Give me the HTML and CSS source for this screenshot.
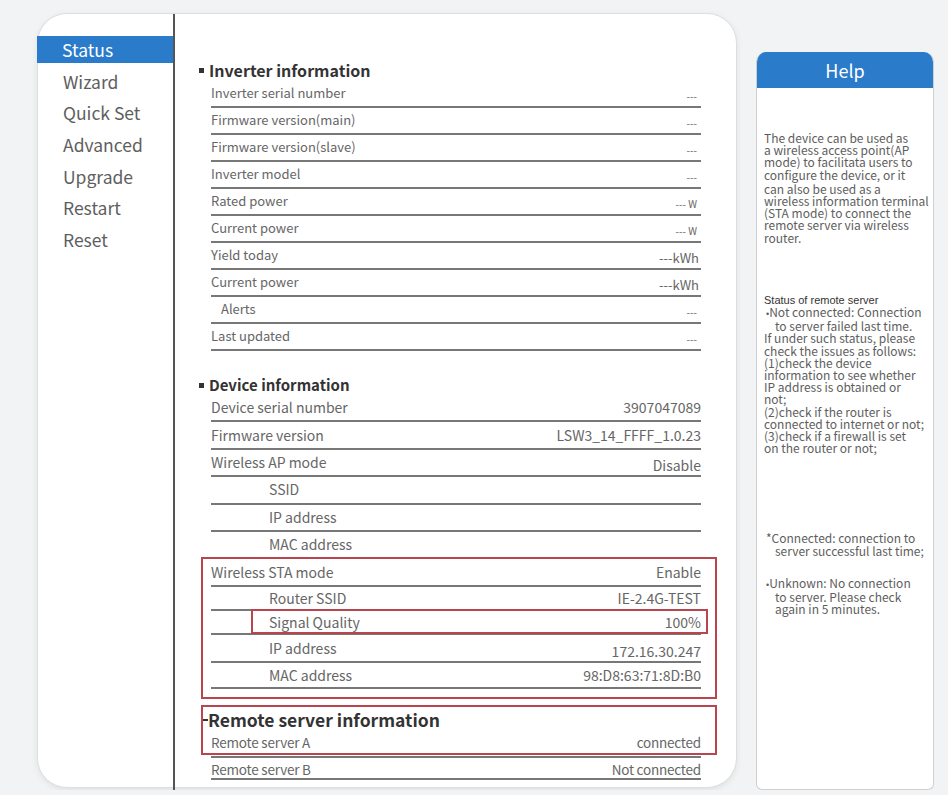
FILE: index.html
```html
<!DOCTYPE html>
<html lang="en">
<head>
    <meta charset="UTF-8">
    <meta name="viewport" content="width=device-width, initial-scale=1.0">
    <title>Status</title>
    <link rel="stylesheet" href="styles.css">
</head>
<body>
    <div class="page">
        <div class="card">
            <nav class="sidebar">
                <a href="#" class="nav-item active">Status</a>
                <a href="#" class="nav-item">Wizard</a>
                <a href="#" class="nav-item">Quick Set</a>
                <a href="#" class="nav-item">Advanced</a>
                <a href="#" class="nav-item">Upgrade</a>
                <a href="#" class="nav-item">Restart</a>
                <a href="#" class="nav-item">Reset</a>
            </nav>

            <main class="content">
                <!-- Inverter -->
                <section class="group inverter">
                    <h2 class="group-title">Inverter information</h2>
                    <div class="row stacked"><span class="label">Inverter serial number</span><span class="value">---</span></div>
                    <div class="row stacked"><span class="label">Firmware version(main)</span><span class="value">---</span></div>
                    <div class="row stacked"><span class="label">Firmware version(slave)</span><span class="value">---</span></div>
                    <div class="row stacked"><span class="label">Inverter model</span><span class="value">---</span></div>
                    <div class="row stacked"><span class="label">Rated power</span><span class="value">--- W</span></div>
                    <div class="row stacked"><span class="label">Current power</span><span class="value">--- W</span></div>
                    <div class="row stacked"><span class="label">Yield today</span><span class="value unit">---kWh</span></div>
                    <div class="row stacked"><span class="label">Current power</span><span class="value unit">---kWh</span></div>
                    <div class="row stacked"><span class="label sub">Alerts</span><span class="value">---</span></div>
                    <div class="row stacked"><span class="label">Last updated</span><span class="value">---</span></div>
                </section>

                <!-- Device -->
                <section class="group device">
                    <h2 class="group-title">Device information</h2>
                    <div class="row"><span class="label">Device serial number</span><span class="value">3907047089</span></div>
                    <div class="row"><span class="label">Firmware version</span><span class="value">LSW3_14_FFFF_1.0.23</span></div>
                    <div class="row"><span class="label">Wireless AP mode</span><span class="value low">Disable</span></div>
                    <div class="row"><span class="label indent">SSID</span><span class="value"></span></div>
                    <div class="row"><span class="label indent">IP address</span><span class="value"></span></div>
                    <div class="row"><span class="label indent">MAC address</span><span class="value"></span></div>

                    <div class="sta-box">
                        <div class="row tall"><span class="label">Wireless STA mode</span><span class="value">Enable</span></div>
                        <div class="row short"><span class="label indent">Router SSID</span><span class="value">IE-2.4G-TEST</span></div>
                        <div class="row short marked"><span class="label indent">Signal Quality</span><span class="value">100%</span></div>
                        <div class="row tall"><span class="label indent">IP address</span><span class="value low">172.16.30.247</span></div>
                        <div class="row"><span class="label indent">MAC address</span><span class="value">98:D8:63:71:8D:B0</span></div>
                    </div>
                </section>

                <!-- Remote server -->
                <section class="group remote">
                    <h2 class="group-title">Remote server information</h2>
                    <div class="row"><span class="label">Remote server A</span><span class="value">connected</span></div>
                    <div class="row last"><span class="label">Remote server B</span><span class="value">Not connected</span></div>
                </section>
            </main>
        </div>

        <aside class="help">
            <div class="help-head">Help</div>
            <div class="help-body">
                <p class="intro">The device can be used as<br>a wireless access point(AP<br>mode) to facilitata users to<br>configure the device, or it<br><span class="gap">can also be used as a</span><br>wireless information terminal<br>(STA mode) to connect the<br>remote server via wireless<br>router.</p>

                <p class="status-title">Status of remote server</p>
                <p class="bullet"><span class="dot">&bull;</span>Not connected: Connection<br>to server failed last time.</p>
                <p>If under such status, please<br>check the issues as follows:<br>(1)check the device<br>information to see whether<br>IP address is obtained or<br>not;<br>(2)check if the router is<br>connected to internet or not;<br>(3)check if a firewall is set<br>on the router or not;</p>

                <p class="bullet connected">*Connected: connection to<br>server successful last time;</p>
                <p class="bullet unknown"><span class="dot">&bull;</span>Unknown: No connection<br>to server. Please check<br>again in 5 minutes.</p>
            </div>
        </aside>
    </div>
</body>
</html>
```

FILE: styles.css
```css
* {
    margin: 0;
    padding: 0;
    box-sizing: border-box;
}
body {
    background: #f2f3f5;
    font-family: "Noto Sans CJK SC", "Noto Sans", sans-serif;
    color: #666;
}
.page {
    display: flex;
    align-items: flex-start;
    padding: 13px 0 0 37px;
}

/* main card with the side menu */
.card {
    display: flex;
    width: 700px;
    height: 775px;
    background: #fff;
    border: 1px solid #dedede;
    border-radius: 30px;
    box-shadow: 0 2px 6px rgba(0, 0, 0, 0.08);
}
.sidebar {
    width: 137px;
    margin-bottom: -8px; /* divider runs a little past the card */
    padding-top: 22px;
    border-right: 2px solid #555;
    display: flex;
    flex-direction: column;
    gap: 4.7px;
}
.nav-item {
    display: block;
    height: 27px;
    line-height: 27px;
    padding-left: 25px;
    font-size: 17.5px;
    color: #5e5e5e;
    text-decoration: none;
}
.nav-item.active {
    background: #2b7bcb;
    color: #fff;
    margin-left: -1px;
}

.content {
    flex: 1;
    padding: 45px 35px 0 24px;
}
.group-title {
    font-size: 16px;
    font-weight: 700;
    line-height: 22px;
    color: #333;
    display: flex;
    align-items: center;
}
.group-title::before {
    content: "";
    width: 5px;
    height: 5px;
    background: #333;
    margin-right: 5px;
}
.row {
    margin-left: 12px;
    height: 27px;
    border-bottom: 2px solid #777;
    display: flex;
    justify-content: space-between;
    align-items: center;
    font-size: 14px;
    line-height: 16px;
}
.label.indent {
    padding-left: 58px;
}
.value.low {
    align-self: flex-end;
    padding-bottom: 1px;
}

/* inverter rows: label on top, value sits on the line */
.inverter .row.stacked {
    align-items: stretch;
    font-size: 13px;
}
.inverter .label {
    padding-top: 4px;
}
.inverter .label.sub {
    padding-left: 10px;
}
.inverter .value {
    align-self: flex-end;
    font-size: 10px;
    line-height: 14px;
    padding-bottom: 3px;
    padding-right: 4px;
}
.inverter .value.unit {
    font-size: 13px;
    padding-right: 2px;
}

.device {
    margin-top: 24px;
}
.device .group-title {
    font-size: 15px;
    line-height: 20px;
}
.device .row {
    height: 27.4px;
    padding-bottom: 1px;
}
.sta-box {
    margin: 0 -14px 0 4px;
    padding: 0 14px 8px 8px;
    outline: 2px solid #b9454f;
}
.sta-box .row {
    margin-left: 0;
    height: 26px;
}
.sta-box .row.tall {
    height: 28px;
}
.sta-box .row.short {
    height: 24px;
}
.row.marked {
    position: relative;
}
.row.marked::after {
    content: "";
    position: absolute;
    left: 40px;
    right: -7px;
    top: -2px;
    bottom: -1px;
    border: 2px solid #b9454f;
}

/* remote server block */
.remote {
    position: relative;
    margin-top: 8px;
    padding-top: 3px;
}
.remote::after {
    content: "";
    position: absolute;
    top: 0;
    left: 2px;
    right: -16px;
    height: 46px;
    border: 2px solid #b9454f;
}
.remote .group-title {
    font-size: 17.5px;
    line-height: 24px;
    margin-left: 4px;
}
.remote .group-title::before {
    width: 5px;
    height: 2px;
    margin-right: 0;
}
.remote .row {
    height: 26px;
    font-size: 13.5px;
    letter-spacing: -0.2px;
    align-items: flex-start;
    padding-top: 2px;
}
.remote .row.last {
    height: 22px;
    padding-top: 3px;
}

/* help panel on the right */
.help {
    width: 178px;
    height: 738px;
    margin: 39px 0 0 19px;
    background: #fff;
    border: 1.5px solid #cfcfcf;
    border-top: none;
    border-radius: 10px 10px 6px 6px;
    overflow: hidden;
}
.help-head {
    height: 36px;
    line-height: 36px;
    background: #2b7bcb;
    color: #fff;
    text-align: center;
    font-size: 18px;
}
.help-body {
    padding: 44px 0 0 7px;
    font-size: 12px;
    line-height: 12.2px;
    color: #5e5e5e;
    white-space: nowrap;
}
.help-body .gap {
    display: inline-block;
    margin-top: 2px;
}
.help-body .status-title {
    margin-top: 50px;
    font-family: "Liberation Sans", sans-serif;
    font-size: 11px;
    color: #333;
}
.help-body .bullet {
    padding-left: 11px;
    text-indent: -9px;
}
.help-body .dot {
    font-family: "Liberation Sans", sans-serif;
    font-size: 9px;
}
.help-body .connected {
    margin-top: 78px;
}
.help-body .unknown {
    margin-top: 20px;
}
```
